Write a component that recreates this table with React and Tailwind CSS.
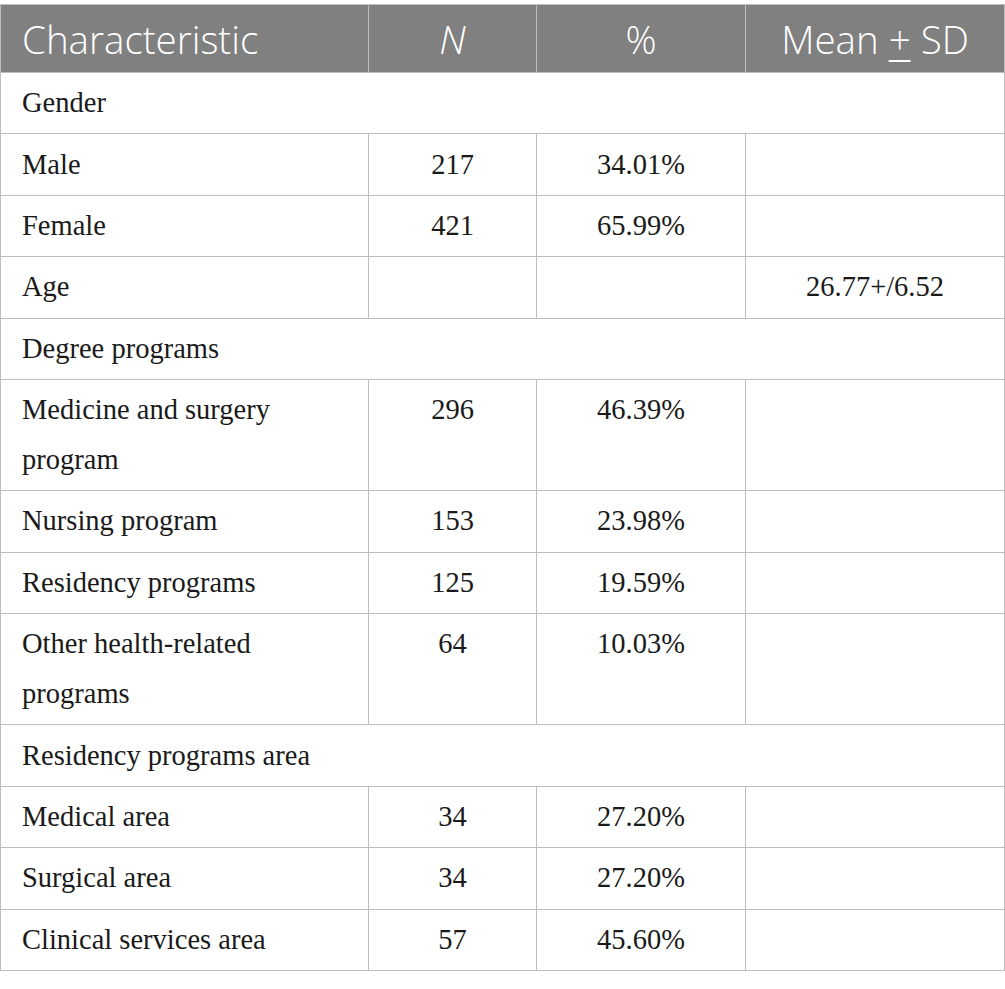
import React from 'react';

const rows = [
  { label: 'Gender', section: true },
  { label: 'Male', n: '217', pct: '34.01%' },
  { label: 'Female', n: '421', pct: '65.99%' },
  { label: 'Age', mean: '26.77+/6.52' },
  { label: 'Degree programs', section: true },
  { label: ['Medicine and surgery', 'program'], n: '296', pct: '46.39%' },
  { label: 'Nursing program', n: '153', pct: '23.98%' },
  { label: 'Residency programs', n: '125', pct: '19.59%' },
  { label: ['Other health-related', 'programs'], n: '64', pct: '10.03%' },
  { label: 'Residency programs area', section: true },
  { label: 'Medical area', n: '34', pct: '27.20%' },
  { label: 'Surgical area', n: '34', pct: '27.20%' },
  { label: 'Clinical services area', n: '57', pct: '45.60%' },
];

const cell = 'border border-[#bdbdbd] px-[21px] py-[5.2px] align-top leading-[50px]';

export default function App() {
  return (
    <div className="w-[1005px] h-[989px] bg-white pt-[4px]">
      <table
        className="border-collapse table-fixed w-[1004px] text-[#1a1a1a] text-[28.5px]"
        style={{ fontFamily: '"Liberation Serif", serif' }}
      >
        <colgroup>
          <col className="w-[368px]" />
          <col className="w-[168px]" />
          <col className="w-[209px]" />
          <col className="w-[259px]" />
        </colgroup>
        <thead>
          <tr
            className="bg-[#7f807f] text-white text-[38.5px] leading-none"
            style={{ fontFamily: '"Open Sans", sans-serif' }}
          >
            <th className="border border-[#bdbdbd] h-[68px] px-[21px] pt-[1px] text-left font-light">Characteristic</th>
            <th className="border border-[#bdbdbd] h-[68px] pt-[1px] text-center font-light italic">N</th>
            <th className="border border-[#bdbdbd] h-[68px] pt-[1px] text-center font-light">%</th>
            <th className="border border-[#bdbdbd] h-[68px] pt-[1px] text-center font-light">
              Mean <span className="underline underline-offset-[6px] decoration-2">+</span> SD
            </th>
          </tr>
        </thead>
        <tbody>
          {rows.map((r, i) =>
            r.section ? (
              <tr key={i}>
                <td colSpan={4} className={cell}>{r.label}</td>
              </tr>
            ) : (
              <tr key={i}>
                <td className={cell}>
                  {Array.isArray(r.label) ? (
                    <>
                      {r.label[0]}
                      <br />
                      {r.label[1]}
                    </>
                  ) : (
                    r.label
                  )}
                </td>
                <td className={cell + ' text-center'}>{r.n}</td>
                <td className={cell + ' text-center'}>{r.pct}</td>
                <td className={cell + ' text-center'}>{r.mean}</td>
              </tr>
            )
          )}
        </tbody>
      </table>
    </div>
  );
}
